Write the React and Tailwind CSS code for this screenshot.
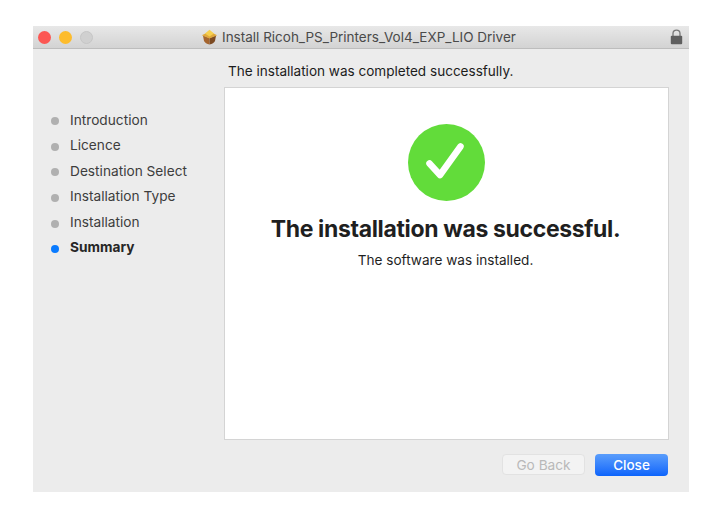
const FONT = "font-['Inter','Liberation_Sans',sans-serif]"

const steps = ['Introduction', 'Licence', 'Destination Select', 'Installation Type', 'Installation']

const PackageIcon = () => (
  <svg width="17" height="16" viewBox="0 0 17 16" className="flex-none">
    <path d="M2 6.5 L8.5 9 L8.5 15.5 C6 15 3.5 13.5 3 12 Z" fill="#a5652f" />
    <path d="M15 6.5 L8.5 9 L8.5 15.5 C11 15 13.5 13.5 14 12 Z" fill="#7c4a22" />
    <path d="M0.8 6.2 L8.5 2.6 L16.2 6.2 L8.5 9.6 Z" fill="#e0a93c" />
    <path d="M4 4.6 L8.5 0.8 L13 4.6 L8.5 7.4 Z" fill="#f6d04f" />
  </svg>
)

const LockIcon = () => (
  <svg width="13" height="16" viewBox="0 0 13 16" className="flex-none">
    <path d="M3 7 V4.6 C3 2.5 4.4 1.2 6.5 1.2 C8.6 1.2 10 2.5 10 4.6 V7" fill="none" stroke="#777" strokeWidth="1.3" />
    <rect x="0.8" y="6.8" width="11.4" height="8.4" rx="1" fill="#5f5f5f" />
  </svg>
)

const Step = ({ label, active }) => (
  <li className="flex h-[25.6px] items-center">
    <span className={`mt-[3px] h-2 w-2 flex-none rounded-full ${active ? 'bg-[#0a7bff]' : 'bg-[#b0b0b0]'}`} />
    <span className={`ml-[11px] text-[13.7px] ${active ? 'font-bold text-[#262626]' : 'text-[#3d3d3d]'}`}>{label}</span>
  </li>
)

export default function App() {
  return (
    <div className={`h-[513px] w-[716px] overflow-hidden bg-white pl-[33px] pt-[26px] ${FONT}`}>
      <div className="flex h-[466px] w-[656px] flex-col bg-[#ececec]">
        <div className="flex h-[23px] flex-none items-center border-b border-[#bdbdbd] bg-gradient-to-b from-[#e8e8e8] to-[#d3d3d3] pl-[5px] pr-[6px]">
          <div className="flex w-[160px] flex-none gap-[8px]">
            <span className="h-[13px] w-[13px] rounded-full bg-[#fc5753]" />
            <span className="h-[13px] w-[13px] rounded-full bg-[#fdbc2c]" />
            <span className="h-[13px] w-[13px] rounded-full border border-[#c6c6c6] bg-[#d0d0d0]" />
          </div>
          <div className="flex flex-1 items-center gap-[4px] pl-[3px]">
            <PackageIcon />
            <span className="pt-[1px] text-[13.5px] text-[#4a4a4a]">Install Ricoh_PS_Printers_Vol4_EXP_LIO Driver</span>
          </div>
          <LockIcon />
        </div>

        <div className="flex flex-1 pr-[20px]">
          <ul className="w-[191px] flex-none pl-[18px] pt-[58px]">
            {steps.map((s) => <Step key={s} label={s} />)}
            <Step label="Summary" active />
          </ul>

          <div className="flex flex-1 flex-col">
            <p className="ml-[4px] flex h-[38px] flex-none items-center pt-[7px] text-[13.55px] text-[#1c1c1c]">
              The installation was completed successfully.
            </p>
            <div className="flex h-[353px] flex-none flex-col items-center border border-[#d4d4d4] bg-white pt-[36px]">
              <svg width="77" height="77" viewBox="0 0 77 77" className="flex-none">
                <circle cx="38.5" cy="38.5" r="38.5" fill="#62dc3a" />
                <path d="M21.5 39.5 L32 51 L52.5 22.5" fill="none" stroke="#fff" strokeWidth="6.5" strokeLinecap="round" strokeLinejoin="round" />
              </svg>
              <h1 className="mt-[11px] pr-[2px] text-[23px] font-bold tracking-[-0.35px] text-[#1f1f1f]">The installation was successful.</h1>
              <p className="mt-[3px] pr-[2px] text-[13.6px] text-[#1f1f1f]">The software was installed.</p>
            </div>
            <div className="flex flex-1 items-start justify-end gap-[10px] pr-[1px] pt-[14px]">
              <button className="h-[21px] w-[83px] rounded-[4px] border border-[#e2e2e2] bg-[#f3f3f3] text-[13.7px] text-[#b9b9b9]">Go Back</button>
              <button className="h-[22px] w-[73px] rounded-[4px] bg-gradient-to-b from-[#5a9dfb] to-[#0a63fb] text-[13.5px] font-medium text-white">Close</button>
            </div>
          </div>
        </div>
      </div>
    </div>
  )
}
